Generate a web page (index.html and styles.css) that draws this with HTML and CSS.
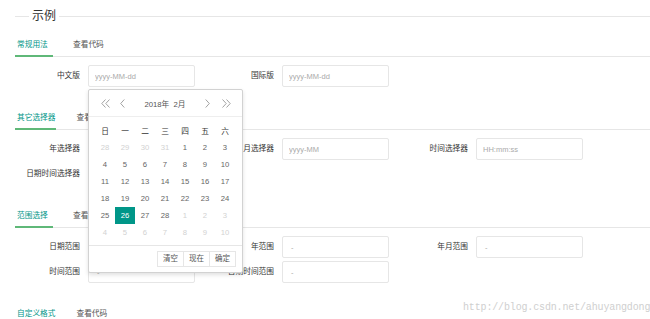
FILE: index.html
```html
<!DOCTYPE html>
<html lang="zh-CN">
  <head>
    <meta charset="UTF-8" />
    <meta name="viewport" content="width=device-width, initial-scale=1.0" />
    <title>laydate 示例</title>
    <link rel="stylesheet" href="styles.css">
  </head>
  <body>
    <div class="page">
      <fieldset class="title"><legend>示例</legend></fieldset>

      <!-- 常规用法 -->
      <div class="tab">
        <ul class="tab-title">
          <li class="this">常规用法</li>
          <li>查看代码</li>
        </ul>
        <div class="tab-content">
          <div class="form-row">
            <div class="form-item"><label>中文版</label><input type="text" placeholder="yyyy-MM-dd" /></div>
            <div class="form-item"><label>国际版</label><input type="text" placeholder="yyyy-MM-dd" /></div>
          </div>
        </div>
      </div>

      <!-- 其它选择器 -->
      <div class="tab">
        <ul class="tab-title">
          <li class="this">其它选择器</li>
          <li>查看代码</li>
        </ul>
        <div class="tab-content">
          <div class="form-row">
            <div class="form-item"><label>年选择器</label><input type="text" placeholder="yyyy" /></div>
            <div class="form-item"><label>月选择器</label><input type="text" placeholder="yyyy-MM" /></div>
            <div class="form-item"><label>时间选择器</label><input type="text" placeholder="HH:mm:ss" /></div>
          </div>
          <div class="form-row">
            <div class="form-item"><label>日期时间选择器</label><input type="text" placeholder="yyyy-MM-dd HH:mm:ss" /></div>
          </div>
        </div>
      </div>

      <!-- 范围选择 -->
      <div class="tab">
        <ul class="tab-title">
          <li class="this">范围选择</li>
          <li>查看代码</li>
        </ul>
        <div class="tab-content">
          <div class="form-row">
            <div class="form-item"><label>日期范围</label><input type="text" placeholder=" - " /></div>
            <div class="form-item"><label>年范围</label><input type="text" placeholder=" - " /></div>
            <div class="form-item"><label>年月范围</label><input type="text" placeholder=" - " /></div>
          </div>
          <div class="form-row">
            <div class="form-item"><label>时间范围</label><input type="text" placeholder=" - " /></div>
            <div class="form-item"><label>日期时间范围</label><input type="text" placeholder=" - " /></div>
          </div>
        </div>
      </div>

      <!-- 自定义格式 -->
      <div class="tab">
        <ul class="tab-title">
          <li class="this">自定义格式</li>
          <li>查看代码</li>
        </ul>
      </div>

      <!-- 弹出的日期面板 -->
      <div class="laydate">
        <div class="laydate-header">
          <span class="arrow">
            <svg width="9" height="9" viewBox="0 0 9 9"><path d="M4.5 0.5 L0.8 4.5 L4.5 8.5 M8.5 0.5 L4.8 4.5 L8.5 8.5" fill="none" stroke="#999" stroke-width="0.9"/></svg>
          </span>
          <span class="arrow prev">
            <svg width="5" height="9" viewBox="0 0 5 9"><path d="M4.3 0.5 L0.7 4.5 L4.3 8.5" fill="none" stroke="#999" stroke-width="0.9"/></svg>
          </span>
          <span class="ym">2018年&nbsp;&nbsp;2月</span>
          <span class="arrow next">
            <svg width="5" height="9" viewBox="0 0 5 9"><path d="M0.7 0.5 L4.3 4.5 L0.7 8.5" fill="none" stroke="#999" stroke-width="0.9"/></svg>
          </span>
          <span class="arrow">
            <svg width="9" height="9" viewBox="0 0 9 9"><path d="M0.5 0.5 L4.2 4.5 L0.5 8.5 M4.5 0.5 L8.2 4.5 L4.5 8.5" fill="none" stroke="#999" stroke-width="0.9"/></svg>
          </span>
        </div>
        <div class="laydate-content">
          <div class="week">日</div><div class="week">一</div><div class="week">二</div><div class="week">三</div><div class="week">四</div><div class="week">五</div><div class="week">六</div>
          <div class="day other">28</div><div class="day other">29</div><div class="day other">30</div><div class="day other">31</div><div class="day">1</div><div class="day">2</div><div class="day">3</div>
          <div class="day">4</div><div class="day">5</div><div class="day">6</div><div class="day">7</div><div class="day">8</div><div class="day">9</div><div class="day">10</div>
          <div class="day">11</div><div class="day">12</div><div class="day">13</div><div class="day">14</div><div class="day">15</div><div class="day">16</div><div class="day">17</div>
          <div class="day">18</div><div class="day">19</div><div class="day">20</div><div class="day">21</div><div class="day">22</div><div class="day">23</div><div class="day">24</div>
          <div class="day">25</div><div class="day selected">26</div><div class="day">27</div><div class="day">28</div><div class="day other">1</div><div class="day other">2</div><div class="day other">3</div>
          <div class="day other">4</div><div class="day other">5</div><div class="day other">6</div><div class="day other">7</div><div class="day other">8</div><div class="day other">9</div><div class="day other">10</div>
        </div>
        <div class="laydate-footer">
          <div class="btns">
            <span>清空</span><span>现在</span><span>确定</span>
          </div>
        </div>
      </div>

      <div class="watermark">http://blog.csdn.net/ahuyangdong</div>
    </div>
  </body>
</html>
```

FILE: styles.css
```css
body {
  margin: 0;
  background-color: #fff;
  color: #333;
  font-family: "Liberation Sans", "Noto Sans CJK SC", sans-serif;
  font-size: 7.7px;
  overflow: hidden;
}
.page {
  position: relative;
  height: 319px;
  padding-left: 15px;
  overflow: hidden;
}
.title {
  margin: 8px 0 0;
  padding: 0;
  border: none;
  border-top: 1px solid #e6e6e6;
}
.title legend {
  margin-left: 14px;
  padding: 0 3px;
  font-size: 12px;
  line-height: 16px;
  color: #333;
}
.tab {
  margin-bottom: 19px;
}
.page > .title + .tab {
  margin-top: 9px;
}
.tab-title {
  display: flex;
  margin: 0;
  padding: 0;
  list-style: none;
  height: 23px;
  border-bottom: 1px solid #e6e6e6;
}
.tab-title li {
  box-sizing: border-box;
  min-width: 38px;
  height: 24px;
  line-height: 23px;
  padding: 0 1px 0 2px;
  margin-right: 18px;
  color: #555;
}
.tab-title li.this {
  color: #009688;
  border-bottom: 2px solid #5fb878;
}
.tab-content {
  padding-top: 8px;
}
.form-row {
  display: flex;
  margin-bottom: 3px;
}
.form-row:last-child {
  margin-bottom: 0;
}
.form-item {
  display: flex;
  margin-right: 14px;
}
.form-item label {
  box-sizing: border-box;
  width: 73px;
  padding-right: 8px;
  text-align: right;
  line-height: 22px;
  color: #333;
}
.form-item input {
  box-sizing: border-box;
  width: 107px;
  height: 22px;
  padding: 0 6px;
  border: 1px solid #e6e6e6;
  border-radius: 2px;
  font-family: inherit;
  font-size: 7.5px;
  color: #333;
  outline: none;
}
.form-item input::placeholder {
  color: #aaa;
}

/* date panel */
.laydate {
  position: absolute;
  left: 88px;
  top: 89px;
  width: 155px;
  box-sizing: border-box;
  background-color: #fff;
  border: 1px solid #d2d2d2;
  border-radius: 2px;
  box-shadow: 0 2px 4px rgba(0, 0, 0, 0.12);
}
.laydate-header {
  display: flex;
  align-items: center;
  height: 26px;
  padding: 0 11px 0 12px;
  border-bottom: 1px solid #eee;
}
.laydate-header .arrow {
  display: flex;
}
.laydate-header .prev {
  margin-left: 10px;
}
.laydate-header .next {
  margin-right: 12px;
}
.laydate-header .ym {
  flex: 1;
  text-align: center;
  color: #555;
}
.laydate-content {
  display: grid;
  grid-template-columns: repeat(7, 20px);
  grid-auto-rows: 17px;
  padding: 5px 6px 4px;
}
.laydate-content .week,
.laydate-content .day {
  display: flex;
  align-items: center;
  justify-content: center;
}
.laydate-content .week {
  color: #333;
}
.laydate-content .day {
  color: #666;
}
.laydate-content .day.other {
  color: #d2d2d2;
}
.laydate-content .day.selected {
  background-color: #009688;
  color: #fff;
}
.laydate-footer {
  display: flex;
  justify-content: flex-end;
  align-items: center;
  height: 26px;
  padding-right: 6px;
  border-top: 1px solid #e6e6e6;
}
.btns {
  display: flex;
}
.btns span {
  height: 16px;
  line-height: 14px;
  box-sizing: border-box;
  padding: 0 5px;
  border: 1px solid #e6e6e6;
  color: #555;
  font-size: 7.5px;
}
.btns span + span {
  border-left: none;
}

.watermark {
  position: absolute;
  left: 463px;
  top: 302px;
  font-family: "Liberation Mono", monospace;
  font-size: 10px;
  letter-spacing: -0.15px;
  color: #cfcfcf;
}
```
